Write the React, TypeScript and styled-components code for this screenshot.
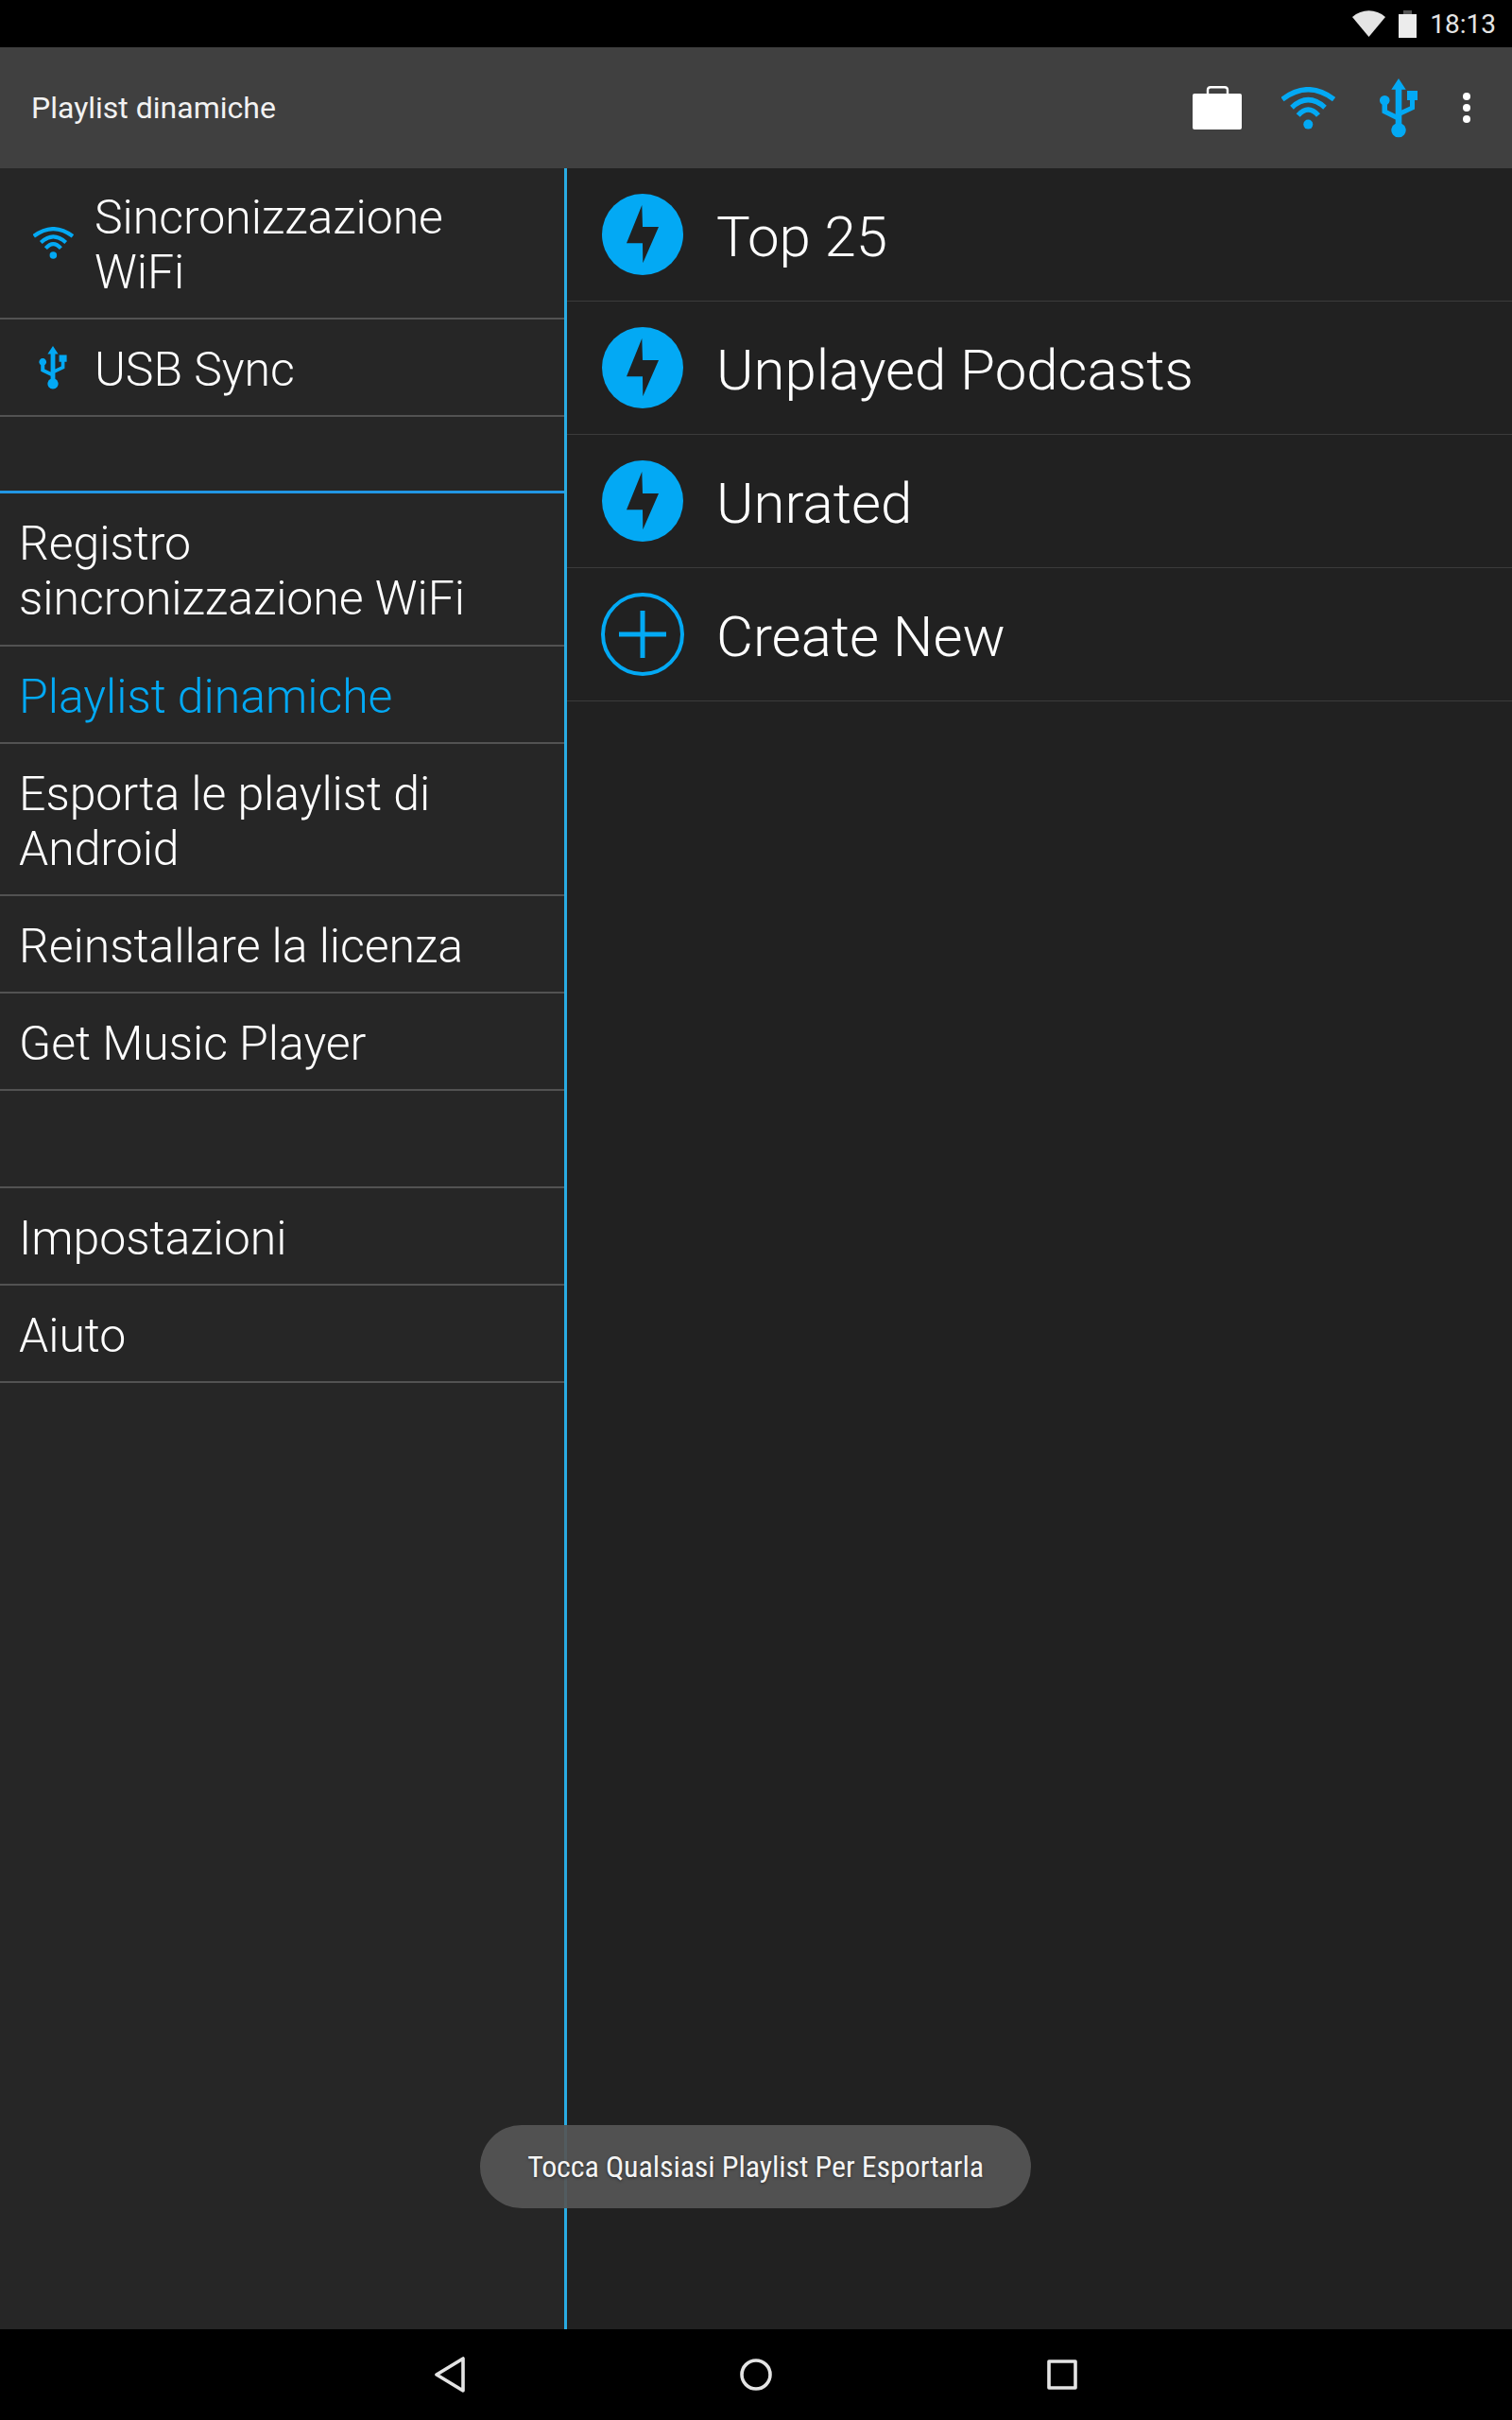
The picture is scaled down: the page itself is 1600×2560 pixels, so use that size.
import React from 'react';
import styled, { createGlobalStyle } from 'styled-components';

const GlobalStyle = createGlobalStyle`
    html, body {
        margin: 0;
        padding: 0;
        background: #000;
    }
    * {
        box-sizing: border-box;
    }
`;

const BLUE = '#03a9f4';

const Screen = styled.div`
    position: relative;
    width: 1600px;
    height: 2560px;
    display: flex;
    flex-direction: column;
    font-family: Roboto, 'Liberation Sans', sans-serif;
    color: #fff;
    overflow: hidden;
`;

const StatusBar = styled.div`
    height: 50px;
    background: #000;
    display: flex;
    align-items: center;
    justify-content: flex-end;
    padding-right: 17px;
    gap: 14px;
    flex: none;
`;

const Clock = styled.span`
    font-size: 28px;
    color: #e4e4e4;
`;

const Toolbar = styled.div`
    height: 128px;
    background: #404040;
    display: flex;
    align-items: center;
    padding-left: 33px;
    padding-right: 24px;
    flex: none;
`;

const ToolbarTitle = styled.div`
    font-size: 32px;
    color: #f2f2f2;
    flex: 1;
`;

const ActionSlot = styled.div<{ $narrow?: boolean }>`
    width: ${(p) => (p.$narrow ? 48 : 96)}px;
    display: flex;
    align-items: center;
    justify-content: center;
`;

const Content = styled.div`
    flex: 1;
    display: flex;
    min-height: 0;
`;

const Sidebar = styled.div`
    width: 597px;
    background: #262626;
    flex: none;
`;

const Divider = styled.div`
    width: 3px;
    background: #29abe2;
    flex: none;
`;

const SideRow = styled.div<{ $height: number; $accent?: boolean }>`
    height: ${(p) => p.$height}px;
    display: flex;
    align-items: center;
    border-bottom: ${(p) => (p.$accent ? '3px solid #2196e3' : '2px solid #525252')};
`;

const SideIcon = styled.div`
    width: 100px;
    padding: 0 8px 0 20px;
    flex: none;
    display: flex;
    justify-content: center;
`;

const SideLabel = styled.div<{ $active?: boolean; $indent?: boolean }>`
    font-size: 50px;
    font-weight: 300;
    line-height: 58px;
    letter-spacing: -0.05px;
    padding-top: 4px;
    padding-left: ${(p) => (p.$indent ? 0 : 20)}px;
    color: ${(p) => (p.$active ? BLUE : '#fff')};
`;

const Playlists = styled.div`
    flex: 1;
    background: #212121;
`;

const PlaylistRow = styled.div`
    height: 141px;
    display: flex;
    align-items: center;
    padding-left: 37px;
    border-bottom: 1px solid #3b3b3b;
`;

const PlaylistLabel = styled.div`
    font-size: 60px;
    font-weight: 300;
    padding-top: 4px;
    margin-left: 35px;
`;

const PlusSlot = styled.div`
    display: flex;
    margin: 0 -1px;
`;

const Toast = styled.div`
    position: absolute;
    left: 508px;
    top: 2248px;
    width: 583px;
    height: 88px;
    border-radius: 44px;
    background: rgba(85, 85, 85, 0.93);
    display: flex;
    align-items: center;
    justify-content: center;
    font-size: 32px;
    font-stretch: 75%;
    letter-spacing: -0.1px;
    color: #f4f4f4;
    text-shadow: 0 1px 3px rgba(0, 0, 0, 0.5);
`;

const NavBar = styled.div`
    height: 96px;
    background: #000;
    flex: none;
    display: flex;
    align-items: center;
    justify-content: center;
`;

const NavButton = styled.div`
    width: 324px;
    display: flex;
    justify-content: center;
`;

const WifiIcon = ({ width, height }: { width: number; height: number }) => (
    <svg width={width} height={height} viewBox="0 0 57 45" fill="none" stroke={BLUE} strokeWidth="5.4">
        <path d="M1 13Q28.3 -7.6 55.6 13" />
        <path d="M11 21.7Q28.3 5.7 46 21.7" />
        <path d="M17.7 30Q28.3 18 39 30" />
        <circle cx="28.3" cy="39.6" r="5" fill={BLUE} stroke="none" />
    </svg>
);

const UsbIcon = ({ width, height }: { width: number; height: number }) => (
    <svg width={width} height={height} viewBox="0 0 40 63" fill={BLUE}>
        <path d="M20 0L27.7 11.7H23.3V33.5L32 29.5V23H29V13H40V23H37V32.5L23.3 39V47.7A7.7 7.7 0 1 1 16.7 47.7V43.5L2.5 36.5V27.8A5.3 5.3 0 1 1 8 27.8V33.5L16.7 37.7V11.7H12.3Z" />
    </svg>
);

const BoltBadge = () => (
    <svg width="86" height="86" viewBox="0 0 86 86">
        <circle cx="43" cy="43" r="43" fill={BLUE} />
        <path d="M42.3 12L26 52.3H43L43.3 73.3L60 35H43Z" fill="#212121" />
    </svg>
);

const PlusBadge = () => (
    <svg width="88" height="88" viewBox="0 0 88 88" fill="none" stroke={BLUE} strokeWidth="4">
        <circle cx="44" cy="44" r="42" />
        <path d="M44 19V69M19 44H69" strokeWidth="5" />
    </svg>
);

export default function App() {
    return (
        <Screen>
            <GlobalStyle />
            <StatusBar>
                <svg width="35" height="28" viewBox="0 0 35 28">
                    <path d="M0 7C10 -2 25 -2 35 7L17.5 28Z" fill="#e4e4e4" />
                </svg>
                <svg width="19" height="29" viewBox="0 0 19 29">
                    <path d="M5 0H14V4H5Z" fill="#555" />
                    <path d="M0 4H19V29H0Z" fill="#ececec" />
                </svg>
                <Clock>18:13</Clock>
            </StatusBar>
            <Toolbar>
                <ToolbarTitle>Playlist dinamiche</ToolbarTitle>
                <ActionSlot>
                    <svg width="52" height="46" viewBox="0 0 52 46" fill="#fff">
                        <path d="M2 8H50A2 2 0 0 1 52 10V44A2 2 0 0 1 50 46H2A2 2 0 0 1 0 44V10A2 2 0 0 1 2 8Z" />
                        <path d="M16 9V4A3 3 0 0 1 19 1.2H34A3 3 0 0 1 37 4V9" fill="none" stroke="#fff" strokeWidth="2.4" />
                    </svg>
                </ActionSlot>
                <ActionSlot><WifiIcon width={57} height={45} /></ActionSlot>
                <ActionSlot><UsbIcon width={40} height={63} /></ActionSlot>
                <ActionSlot $narrow>
                    <svg width="8" height="32" viewBox="0 0 8 32" fill="#fff">
                        <circle cx="4" cy="4" r="4" />
                        <circle cx="4" cy="16" r="4" />
                        <circle cx="4" cy="28" r="4" />
                    </svg>
                </ActionSlot>
            </Toolbar>
            <Content>
                <Sidebar>
                    <SideRow $height={160}>
                        <SideIcon><WifiIcon width={43} height={34} /></SideIcon>
                        <SideLabel $indent>Sincronizzazione<br />WiFi</SideLabel>
                    </SideRow>
                    <SideRow $height={103}>
                        <SideIcon><UsbIcon width={30} height={46} /></SideIcon>
                        <SideLabel $indent>USB Sync</SideLabel>
                    </SideRow>
                    <SideRow $height={81} $accent />
                    <SideRow $height={162}><SideLabel>Registro<br />sincronizzazione WiFi</SideLabel></SideRow>
                    <SideRow $height={103}><SideLabel $active>Playlist dinamiche</SideLabel></SideRow>
                    <SideRow $height={161}><SideLabel>Esporta le playlist di<br />Android</SideLabel></SideRow>
                    <SideRow $height={103}><SideLabel>Reinstallare la licenza</SideLabel></SideRow>
                    <SideRow $height={103}><SideLabel>Get Music Player</SideLabel></SideRow>
                    <SideRow $height={103} />
                    <SideRow $height={103}><SideLabel>Impostazioni</SideLabel></SideRow>
                    <SideRow $height={103}><SideLabel>Aiuto</SideLabel></SideRow>
                </Sidebar>
                <Divider />
                <Playlists>
                    <PlaylistRow><BoltBadge /><PlaylistLabel>Top 25</PlaylistLabel></PlaylistRow>
                    <PlaylistRow><BoltBadge /><PlaylistLabel>Unplayed Podcasts</PlaylistLabel></PlaylistRow>
                    <PlaylistRow><BoltBadge /><PlaylistLabel>Unrated</PlaylistLabel></PlaylistRow>
                    <PlaylistRow><PlusSlot><PlusBadge /></PlusSlot><PlaylistLabel>Create New</PlaylistLabel></PlaylistRow>
                </Playlists>
            </Content>
            <NavBar>
                <NavButton>
                    <svg width="32" height="38" viewBox="0 0 32 38" fill="none" stroke="#e4e4e4" strokeWidth="3.6" strokeLinejoin="round">
                        <path d="M30 2V36L2 19Z" />
                    </svg>
                </NavButton>
                <NavButton>
                    <svg width="34" height="34" viewBox="0 0 34 34" fill="none" stroke="#e4e4e4" strokeWidth="3.6">
                        <circle cx="17" cy="17" r="15" />
                    </svg>
                </NavButton>
                <NavButton>
                    <svg width="32" height="32" viewBox="0 0 32 32" fill="none" stroke="#e4e4e4" strokeWidth="3.6" strokeLinejoin="round">
                        <path d="M2 2H30V30H2Z" />
                    </svg>
                </NavButton>
            </NavBar>
            <Toast>Tocca Qualsiasi Playlist Per Esportarla</Toast>
        </Screen>
    );
}
